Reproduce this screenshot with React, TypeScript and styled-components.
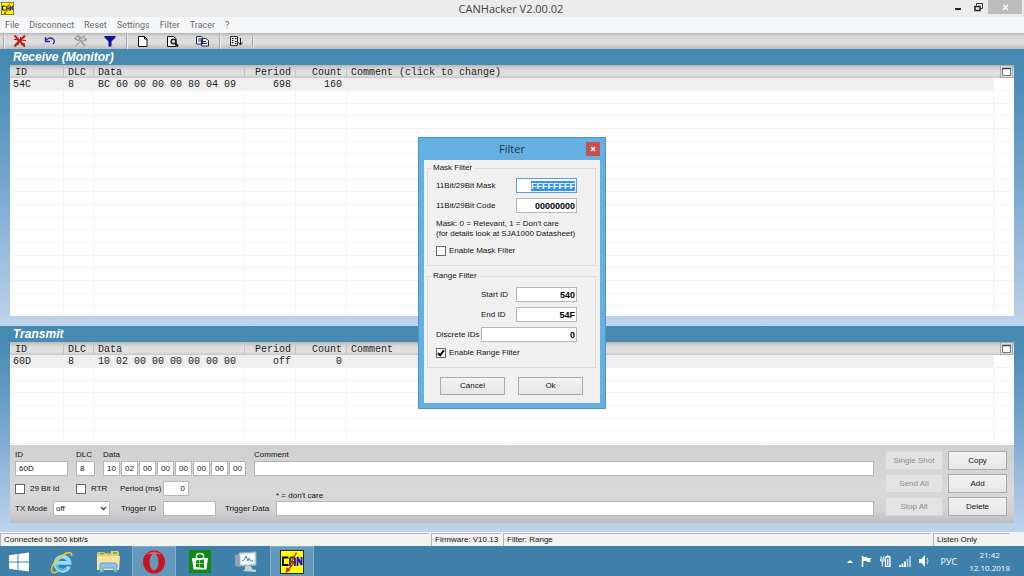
import React, { useEffect, useRef } from "react";
import styled, { createGlobalStyle, css } from "styled-components";

const UI = `"Liberation Sans", Arial, sans-serif`;
const SEGOE = `"Open Sans", "Noto Sans", sans-serif`;
const MONO = `"Liberation Mono", "DejaVu Sans Mono", monospace`;

const Global = createGlobalStyle`
  *, *::before, *::after { box-sizing: border-box; }
  body { margin: 0; background: #f0f0f0; }
  button, input, select { font: inherit; color: inherit; margin: 0; border-radius: 0; }
`;

const Page = styled.div`
  position: relative;
  display: flex;
  flex-direction: column;
  min-height: 100vh;
  font: 8px/12px ${UI};
  color: #111;
`;

/* window chrome */
const TitleBar = styled.header`
  display: grid;
  grid-template-columns: 1fr auto 1fr;
  height: 17px;
  padding-right: 2px;
  background: #ebebeb;
`;
const AppIcon = styled.div`
  padding: 2px 0 0 1px;
  svg { display: block; }
`;
const WindowTitle = styled.h1`
  margin: 0;
  font: 400 11px/17px ${SEGOE};
  color: #444;
`;
const WindowButtons = styled.div`
  display: flex;
  justify-content: flex-end;
`;
const WindowButton = styled.button<{ $close?: boolean }>`
  display: flex;
  align-items: center;
  justify-content: center;
  width: ${(p) => (p.$close ? 34 : 20)}px;
  height: 14px;
  padding: 0;
  border: 0;
  background: ${(p) => (p.$close ? "#bcbcbc" : "transparent")};
`;
const MenuBar = styled.nav`
  display: flex;
  gap: 10px;
  height: 16px;
  padding-left: 5px;
  background: #f5f6f7;
`;
const MenuItem = styled.button`
  padding: 0;
  border: 0;
  background: none;
  font: 9px/16px Roboto, ${SEGOE};
  color: #6b6b6b;
`;
const ToolBar = styled.div`
  display: flex;
  align-items: center;
  height: 16px;
  padding-left: 3px;
  background: linear-gradient(#b4b4b4, #d9d9d9 20%, #dfdfdf 60%, #bdbdbd);
`;
const ToolButton = styled.button`
  display: flex;
  align-items: center;
  justify-content: center;
  width: 30px;
  height: 16px;
  padding: 0;
  border: 0;
  background: none;
`;
const ToolGroup = styled.div`
  display: flex;
  padding: 0 1px;
  border-left: 1px solid #a2a2a2;
  box-shadow: inset 1px 0 #eee;
`;

/* message panels */
const Panel = styled.section<{ $grow?: boolean }>`
  display: flex;
  flex-direction: column;
  flex: ${(p) => (p.$grow ? "1 0 277px" : "0 0 206px")};
  padding: 0 10px ${(p) => (p.$grow ? 10 : 9)}px;
  background: linear-gradient(#4489b0, #4a8db6 12%, #7fabd2 55%, #bfd4ec);
`;
const PanelTitle = styled.h2`
  margin: 0;
  padding-left: 3px;
  font: italic 700 12px/17px "Liberation Sans", Arial, sans-serif;
  height: 16px;
  color: #fff;
`;
const Grid = styled.div`
  flex: 1 0 0;
  min-height: 102px;
  overflow: hidden;
  background: #fff;
`;
const Table = styled.table`
  width: 100%;
  border-collapse: separate;
  border-spacing: 0;
  table-layout: fixed;
  font: 10px/10px ${MONO};
  color: #222;
  th, td {
    height: 13px;
    padding: 2px 4px 0;
    text-align: left;
    font-weight: 400;
    white-space: pre;
  }
  th {
    border-right: 1px solid #c4c4c4;
    background: linear-gradient(#b9b9b9, #dcdcdc 35%, #e2e2e2 75%, #c6c6c6);
  }
  th:nth-child(n + 6) { border-right: 0; }
  th:first-child { padding-left: 5px; }
  td {
    border-right: 1px solid #f1f1f1;
    border-bottom: 1px solid #f1f1f1;
  }
  td:first-child { padding-left: 3px; }
  td:last-child { border-right: 0; }
  tbody tr:nth-child(3n) td { height: 12px; }
  th:nth-child(4), td:nth-child(4),
  th:nth-child(5), td:nth-child(5) { text-align: right; }
  th:last-child, td:last-child { padding: 0; }
`;
const Row = styled.tr<{ $active?: boolean }>`
  td:not(:last-child) { background: ${(p) => (p.$active ? "#efefef" : "#fff")}; }
`;
const Col = styled.col<{ $w?: number }>`
  width: ${(p) => (p.$w ? `${p.$w}px` : "auto")};
`;
const Maximize = styled.button`
  display: block;
  width: 13px;
  height: 13px;
  margin-left: 6px;
  padding: 0;
  border: 0;
  background: none;
  svg { display: block; }
`;

/* transmit editor */
const Editor = styled.form`
  display: flex;
  gap: 11px;
  height: 78px;
  padding: 3px 7px 5px 5px;
  background: linear-gradient(#d0d0d0, #d9d9d9 60%, #d2d2d2 85%, #bdbdbd);
`;
const EditorFields = styled.div`
  flex: 1;
  display: flex;
  flex-direction: column;
  gap: 5px;
  min-width: 0;
`;
const FieldRow = styled.div`
  display: flex;
  gap: 8px;
  line-height: 13px;
`;
const Field = styled.label<{ $w?: number }>`
  display: flex;
  flex-direction: column;
  ${(p) => (p.$w ? `width: ${p.$w}px;` : "flex: 1;")}
`;
const ByteField = styled.fieldset`
  display: grid;
  gap: 1px;
  grid-template-columns: repeat(8, 17px);
  margin: 0;
  padding: 0;
  border: 0;
  legend { padding: 0; line-height: 13px; }
`;
const TextBox = styled.input<{ $w?: number; $right?: boolean; $strong?: boolean; $focus?: boolean }>`
  width: ${(p) => (p.$w ? `${p.$w}px` : "100%")};
  min-width: 0;
  height: 15px;
  padding: 0 3px;
  border: 1px solid ${(p) => (p.$focus ? "#5a9be0" : "#b5b5b5")};
  background: #fff;
  outline: 0;
  line-height: 12px;
  text-align: ${(p) => (p.$right ? "right" : "left")};
  ${(p) => p.$strong && css`color: #000; padding: 0 1px; font-size: 9px; font-weight: 700;`}
  &::selection { background: #3393ee; color: #fff; }
`;
const OptionArea = styled.div`
  display: flex;
  gap: 9px;
`;
const OptionRows = styled.div`
  display: flex;
  flex-direction: column;
  gap: 5px;
  width: 201px;
`;
const OptionRow = styled.div`
  display: flex;
  align-items: center;
  height: 15px;
  white-space: nowrap;
`;
const OptionCell = styled.span<{ $w: number }>`
  width: ${(p) => p.$w}px;
`;
const Caption = styled.label<{ $w: number }>`
  width: ${(p) => p.$w}px;
`;
const CheckLabel = styled.label<{ $gap?: number }>`
  display: flex;
  align-items: center;
  gap: ${(p) => p.$gap ?? 3}px;
`;
const CheckBox = styled.input.attrs({ type: "checkbox" })`
  appearance: none;
  display: grid;
  place-items: center;
  width: 10px;
  height: 10px;
  border: 1px solid #666;
  background: #fff;
  &:checked::after {
    content: "";
    width: 4px;
    height: 7px;
    margin-bottom: 2px;
    border: solid #000;
    border-width: 0 2px 2px 0;
    transform: rotate(40deg);
  }
`;
const SelectWrap = styled.span`
  display: grid;
  align-items: center;
  width: 57px;
  margin-right: 11px;
  select, svg { grid-area: 1 / 1; }
  svg { justify-self: end; margin-right: 3px; pointer-events: none; }
`;
const Select = styled.select`
  appearance: none;
  width: 100%;
  height: 15px;
  padding: 0 2px;
  border: 1px solid #b5b5b5;
  background: #fff;
  line-height: 12px;
`;
const TriggerData = styled.div`
  flex: 1;
  display: grid;
  grid-template-columns: 51px 1fr;
  align-content: end;
  align-items: center;
`;
const Note = styled.span`
  grid-column: 2;
  line-height: 10px;
`;
const Actions = styled.div`
  display: grid;
  grid-template-columns: 58px 59px;
  grid-auto-rows: 19px;
  gap: 4px 5px;
  padding-top: 3px;
`;
const PushButton = styled.button`
  padding: 0;
  border: 1px solid #a9a9a9;
  background: linear-gradient(#f2f2f2, #e6e6e6);
  color: #111;
  line-height: 12px;
  &:disabled {
    border-color: #d6d6d6;
    background: #e3e3e3;
    color: #8c8c8c;
  }
`;

/* status bar */
const StatusBar = styled.footer`
  display: grid;
  grid-template-columns: 429px 70px 1fr 76px;
  gap: 2px;
  height: 14px;
  padding: 1px 15px 0 0;
  background: #f1f1f1;
`;
const StatusCell = styled.span`
  padding-left: 3px;
  border-top: 1px solid #b4b4b4;
  border-left: 1px solid #b4b4b4;
  line-height: 12px;
  white-space: nowrap;
`;

/* taskbar */
const TaskBar = styled.nav`
  display: flex;
  justify-content: space-between;
  height: 30px;
  padding-right: 14px;
  background: #3e80a9;
  color: #fff;
`;
const Tasks = styled.div`
  display: flex;
  gap: 2px;
`;
const TaskButton = styled.button<{ $start?: boolean; $open?: boolean }>`
  display: flex;
  align-items: center;
  justify-content: center;
  width: ${(p) => (p.$start ? 38 : 44)}px;
  padding: 0;
  border: 1px solid ${(p) => (p.$open ? "#87b0cb" : "transparent")};
  border-bottom: 0;
  background: ${(p) => (p.$open ? "#6299bc" : "transparent")};
`;
const Tray = styled.div`
  display: flex;
  align-items: center;
  font: 8px/13px ${SEGOE};
`;
const TrayIcons = styled.div`
  display: flex;
  align-items: center;
  gap: 8px;
  margin-right: 12px;
`;
const Language = styled.span`
  font-size: 9px;
`;
const Clock = styled.time`
  margin-left: 12px;
  text-align: center;
`;

/* filter dialog */
const Dialog = styled.div`
  position: absolute;
  top: 137px;
  left: 50%;
  width: 188px;
  transform: translateX(-50%);
  padding: 0 5px 5px;
  border: 1px solid #4a94c8;
  background: #65b0e2;
`;
const DialogTitle = styled.div`
  display: grid;
  grid-template-columns: 1fr auto 1fr;
  align-items: center;
  height: 22px;
  h2 { grid-column: 2; margin: 0; font: 400 11px/20px ${SEGOE}; color: #234; }
`;
const DialogClose = styled.button`
  justify-self: end;
  width: 14px;
  height: 14px;
  padding: 0;
  border: 0;
  background: #c75050;
  svg { display: block; margin: auto; }
`;
const DialogBody = styled.form`
  display: flex;
  flex-direction: column;
  padding: 2px 4px 8px 3px;
  background: #f0f0f0;
`;
const Group = styled.fieldset<{ $top?: number }>`
  min-width: 0;
  margin: 0 0 4px;
  padding: ${(p) => p.$top ?? 4}px 18px 8px 8px;
  border: 1px solid #dcdcdc;
  legend { margin-left: -5px; padding: 0 2px; line-height: 12px; }
  p { margin: 6px 0; line-height: 10px; white-space: nowrap; }
`;
const DialogRow = styled.div<{ $indent?: number; $wide?: boolean }>`
  display: grid;
  grid-template-columns: 1fr ${(p) => (p.$wide ? 96 : 61)}px;
  align-items: center;
  margin-bottom: 5px;
  padding-left: ${(p) => p.$indent ?? 0}px;
  white-space: nowrap;
`;
const DialogActions = styled.div`
  display: flex;
  justify-content: center;
  gap: 13px;
  padding-top: 5px;
  ${PushButton} { width: 65px; height: 18px; }
`;

const CanLogo = ({ size }: { size: number }) => (
  <svg width={size} height={size} viewBox="0 0 24 24">
    <rect x="0.5" y="0.5" width="23" height="23" fill="#ffff00" stroke="#222" />
    <g fill="none" strokeWidth="1.800">
      <path d="M8.500 7.500H3v7.500h5.500" stroke="#000" />
      <path d="M10 16V8.500l1-1h3l1 1V16M10 12h5" stroke="#23236a" />
      <path d="M17.500 16V7l4 8V7" stroke="#1a1acc" />
    </g>
    <path d="M16.500 2.500 11 12.500h3L8 20" fill="none" stroke="#d42a10" strokeWidth="1.500" />
    <path d="M5.500 23l1-6 4 3.500z" fill="#d42a10" />
  </svg>
);

const Icon = ({ children, w = 14, h = 14 }: { children: React.ReactNode; w?: number; h?: number }) => (
  <svg width={w} height={h} viewBox={`0 0 ${w} ${h}`} fill="none" stroke="#111">
    {children}
  </svg>
);

const toolGroups: { name: string; icon: React.ReactNode }[][] = [
  [
    {
      name: "Disconnect",
      icon: (
        <Icon>
          <path d="M1.500 1.500 12 12.500M12 1.500 1.500 12.500" stroke="#e0170b" strokeWidth="2.200" />
          <path d="M1 5.500h3L6 8M8 6l5 .5M2 10h4M7.500 3v3M8 11l4-1.500" stroke="#8b1a10" />
        </Icon>
      ),
    },
    {
      name: "Reset",
      icon: (
        <Icon>
          <path d="M2.500 6.500C5 4 8 3.500 10 5s1.500 3.500 0 5" stroke="#23239a" strokeWidth="1.300" />
          <path d="M2.500 3v4.500H7" stroke="#23239a" strokeWidth="1.300" />
        </Icon>
      ),
    },
    {
      name: "Settings",
      icon: (
        <Icon>
          <path d="M2 4.500 5 2l2.500 1.500L5 6.500zM6 5l6 7" stroke="#999" strokeWidth="1.500" />
          <path d="M2 12.500 9 6M9 6c-1-2 .5-4 2.500-4L10.500 4 12 5.500 13.500 4.500C13.500 7 11 8 9 6" stroke="#a5a5a5" strokeWidth="1.200" />
        </Icon>
      ),
    },
    {
      name: "Filter",
      icon: (
        <Icon>
          <path d="M1.500 2h11v1.500L8.500 7.500V12.500h-3V7.500L1.500 3.500z" fill="#10109a" stroke="none" />
        </Icon>
      ),
    },
  ],
  [
    {
      name: "New",
      icon: (
        <Icon>
          <path d="M2.500 2.500h6l2.500 2.500v7.500H2.500z" fill="#fff" />
          <path d="M8.500 2.500V5H11" />
        </Icon>
      ),
    },
    {
      name: "Find",
      icon: (
        <Icon>
          <path d="M1.500 2.500h6l2.500 2v8h-8.500z" fill="#fff" />
          <circle cx="7.500" cy="7.500" r="2.400" fill="#b9dada" strokeWidth="1.300" />
          <path d="M9 9l3 3.500" strokeWidth="2" />
        </Icon>
      ),
    },
    {
      name: "Copy",
      icon: (
        <Icon>
          <path d="M0.500 2.500h5l1 1v6.500h-6zM5.500 4.500h4.500l2.500 2v5.500h-7z" fill="#fff" stroke="#22225c" />
          <path d="M2 5h3M2 7h3M7 7.500h3M7 9.500h4" stroke="#22225c" />
        </Icon>
      ),
    },
  ],
  [
    {
      name: "Sort",
      icon: (
        <Icon>
          <path d="M1.500 2.500h7v9h-7z" fill="#e4e4e4" stroke="#333" />
          <path d="M3 4.500h1.500M3 6.500h1.500M3 8.500h1.500M6 4.500h1.500M6 7.500h1.500M6 9.500h1.500M11.500 4v7M9.500 8.500l2 2.500 2-2.500" />
        </Icon>
      ),
    },
  ],
];

type Message = { id: string; dlc: string; data: string; period: string; count: string };

const MessageTable = ({ comment, message, blanks }: { comment: string; message: Message; blanks: number }) => (
  <Grid>
    <Table>
      <colgroup>
        <Col $w={54} /><Col $w={30} /><Col $w={151} /><Col $w={51} /><Col $w={51} /><Col /><Col $w={20} />
      </colgroup>
      <thead>
        <tr>
          <th>ID</th><th>DLC</th><th>Data</th><th>Period</th><th>Count</th><th>{comment}</th>
          <th>
            <Maximize type="button" aria-label="Maximize panel">
              <Icon w={13} h={13}>
                <rect x="0.500" y="0.500" width="12" height="12" fill="#ddd" stroke="#aaa" />
                <path d="M2.500 3.500h8v7h-8z" fill="#fff" stroke="#777" />
                <path d="M2 3.500h9" stroke="#444" strokeWidth="1.500" />
              </Icon>
            </Maximize>
          </th>
        </tr>
      </thead>
      <tbody>
        <Row $active>
          <td>{message.id}</td><td>{message.dlc}</td><td>{message.data}</td>
          <td>{message.period}</td><td>{message.count}</td><td /><td />
        </Row>
        {Array.from({ length: blanks }, (_, i) => (
          <Row key={i}><td /><td /><td /><td /><td /><td /><td /></Row>
        ))}
      </tbody>
    </Table>
  </Grid>
);

const FilterDialog = () => {
  const mask = useRef<HTMLInputElement>(null);
  useEffect(() => {
    mask.current?.focus({ preventScroll: true });
    mask.current?.select();
  }, []);
  return (
    <Dialog role="dialog" aria-labelledby="filter-title">
      <DialogTitle>
        <h2 id="filter-title">Filter</h2>
        <DialogClose aria-label="Close">
          <Icon w={6} h={6}><path d="M1 1l4 4M5 1 1 5" stroke="#fff" strokeWidth="1.300" /></Icon>
        </DialogClose>
      </DialogTitle>
      <DialogBody>
        <Group>
          <legend>Mask Filter</legend>
          <DialogRow>
            <label htmlFor="mask">11Bit/29Bit Mask</label>
            <TextBox id="mask" ref={mask} $right $strong $focus defaultValue="FFFFFFFF" />
          </DialogRow>
          <DialogRow>
            <label htmlFor="code">11Bit/29Bit Code</label>
            <TextBox id="code" $right $strong defaultValue="00000000" />
          </DialogRow>
          <p>Mask: 0 = Relevant, 1 = Don't care<br />(for details look at SJA1000 Datasheet)</p>
          <CheckLabel><CheckBox />Enable Mask Filter</CheckLabel>
        </Group>
        <Group $top={5}>
          <legend>Range Filter</legend>
          <DialogRow $indent={45}>
            <label htmlFor="start">Start ID</label>
            <TextBox id="start" $right $strong defaultValue="540" />
          </DialogRow>
          <DialogRow $indent={45}>
            <label htmlFor="end">End ID</label>
            <TextBox id="end" $right $strong defaultValue="54F" />
          </DialogRow>
          <DialogRow $wide>
            <label htmlFor="discrete">Discrete IDs</label>
            <TextBox id="discrete" $right $strong defaultValue="0" />
          </DialogRow>
          <CheckLabel><CheckBox defaultChecked />Enable Range Filter</CheckLabel>
        </Group>
        <DialogActions>
          <PushButton type="button">Cancel</PushButton>
          <PushButton type="button">Ok</PushButton>
        </DialogActions>
      </DialogBody>
    </Dialog>
  );
};

export default function App() {
  return (
    <Page>
      <Global />
      <TitleBar>
        <AppIcon><CanLogo size={13} /></AppIcon>
        <WindowTitle>CANHacker V2.00.02</WindowTitle>
        <WindowButtons>
          <WindowButton aria-label="Minimize">
            <Icon w={8} h={8}><path d="M1 6h6" strokeWidth="2" stroke="#222" /></Icon>
          </WindowButton>
          <WindowButton aria-label="Restore">
            <Icon w={9} h={9}>
              <path d="M2.500 2.500v-2h6v5h-2" stroke="#333" />
              <path d="M1 3.500h5v4H1z" stroke="#222" strokeWidth="1.500" />
            </Icon>
          </WindowButton>
          <WindowButton $close aria-label="Close">
            <Icon w={7} h={7}><path d="M1 1l5 5M6 1 1 6" stroke="#fff" strokeWidth="1.500" /></Icon>
          </WindowButton>
        </WindowButtons>
      </TitleBar>
      <MenuBar>
        {["File", "Disconnect", "Reset", "Settings", "Filter", "Tracer", "?"].map((m) => (
          <MenuItem key={m}>{m}</MenuItem>
        ))}
      </MenuBar>
      <ToolBar>
        {toolGroups.map((group, i) => (
          <ToolGroup key={i}>
            {group.map((t) => (
              <ToolButton key={t.name} aria-label={t.name}>{t.icon}</ToolButton>
            ))}
          </ToolGroup>
        ))}
        <ToolGroup><Icon w={1} h={12}>{null}</Icon></ToolGroup>
      </ToolBar>

      <Panel $grow>
        <PanelTitle>Receive (Monitor)</PanelTitle>
        <MessageTable
          comment="Comment (click to change)"
          message={{ id: "54C", dlc: "8", data: "BC 60 00 00 00 80 04 09", period: "698", count: "160" }}
          blanks={18}
        />
      </Panel>

      <Panel>
        <PanelTitle>Transmit</PanelTitle>
        <MessageTable
          comment="Comment"
          message={{ id: "60D", dlc: "8", data: "10 02 00 00 00 00 00 00", period: "off", count: "0" }}
          blanks={6}
        />
        <Editor>
          <EditorFields>
            <FieldRow>
              <Field $w={53}>ID<TextBox defaultValue="60D" /></Field>
              <Field $w={19}>DLC<TextBox defaultValue="8" /></Field>
              <ByteField>
                <legend>Data</legend>
                {["10", "02", "00", "00", "00", "00", "00", "00"].map((b, i) => (
                  <TextBox key={i} aria-label={`Byte ${i}`} defaultValue={b} />
                ))}
              </ByteField>
              <Field>Comment<TextBox /></Field>
            </FieldRow>
            <OptionArea>
              <OptionRows>
                <OptionRow>
                  <OptionCell $w={61}><CheckLabel $gap={5}><CheckBox />29 Bit Id</CheckLabel></OptionCell>
                  <OptionCell $w={44}><CheckLabel $gap={5}><CheckBox />RTR</CheckLabel></OptionCell>
                  <Caption $w={43} htmlFor="period">Period (ms)</Caption>
                  <TextBox id="period" $w={26} $right defaultValue="0" />
                </OptionRow>
                <OptionRow>
                  <Caption $w={38} htmlFor="tx">TX Mode</Caption>
                  <SelectWrap>
                    <Select id="tx" defaultValue="off"><option>off</option></Select>
                    <Icon w={7} h={5}><path d="M1 1l2.500 2.500L6 1" stroke="#444" strokeWidth="1.300" /></Icon>
                  </SelectWrap>
                  <Caption $w={42} htmlFor="trigger">Trigger ID</Caption>
                  <TextBox id="trigger" $w={53} />
                </OptionRow>
              </OptionRows>
              <TriggerData>
                <Note>* = don't care</Note>
                <label htmlFor="trigger-data">Trigger Data</label>
                <TextBox id="trigger-data" />
              </TriggerData>
            </OptionArea>
          </EditorFields>
          <Actions>
            <PushButton type="button" disabled>Single Shot</PushButton>
            <PushButton type="button">Copy</PushButton>
            <PushButton type="button" disabled>Send All</PushButton>
            <PushButton type="button">Add</PushButton>
            <PushButton type="button" disabled>Stop All</PushButton>
            <PushButton type="button">Delete</PushButton>
          </Actions>
        </Editor>
      </Panel>

      <StatusBar>
        <StatusCell>Connected to 500 kbit/s</StatusCell>
        <StatusCell>Firmware: V10.13</StatusCell>
        <StatusCell>Filter: Range</StatusCell>
        <StatusCell>Listen Only</StatusCell>
      </StatusBar>

      <TaskBar>
        <Tasks>
          <TaskButton $start aria-label="Start">
            <svg width="20" height="20" viewBox="0 0 20 20" fill="#fff">
              <path d="M0 3.200 8.500 2v7.500H0zM9.500 1.900 20 .5v9H9.500zM0 10.500h8.500V18L0 16.800zM9.500 10.500H20v9l-10.500-1.400z" />
            </svg>
          </TaskButton>
          <TaskButton aria-label="Internet Explorer">
            <svg width="24" height="24" viewBox="0 0 24 24" fill="none">
              <path d="M19 16.500A7 7 0 1 1 19.500 12.800H7" stroke="#8fdcfb" strokeWidth="3.800" />
              <path d="M17 18.500A7 7 0 0 1 6 14.500" stroke="#4bbdf2" strokeWidth="1.500" />
              <path d="M21.500 6c1-4-3-4.500-8.500-1C6 9 0 17 2 21.500c1 2 4 1 6.500-.5" stroke="#f2c230" strokeWidth="1.600" />
            </svg>
          </TaskButton>
          <TaskButton aria-label="File Explorer">
            <svg width="25" height="23" viewBox="0 0 25 23">
              <path d="M1 3.500 2 2h6l1 1h6V1h7l1 2v17H1z" fill="#e9c96a" />
              <path d="M4 3.500h4M11 3h3M17 3h4" stroke="#4fb04f" strokeWidth="1.500" />
              <path d="M1 6h23l-1 14H1z" fill="#f7e3a1" />
              <path d="M4 22v-7q0-2 2-2h13q2 0 2 2v7h-3v-4H7v4z" fill="#8ac4ea" stroke="#5ba1d2" />
            </svg>
          </TaskButton>
          <TaskButton $open aria-label="Opera">
            <svg width="24" height="24" viewBox="0 0 24 24">
              <ellipse cx="12" cy="12" rx="11" ry="11.500" fill="#c9141e" />
              <path d="M4 5Q12-2 20 5l-4-1H8z" fill="#ee5a55" />
              <ellipse cx="12" cy="12" rx="4.500" ry="8.500" fill="#6299bc" />
            </svg>
          </TaskButton>
          <TaskButton aria-label="Store">
            <svg width="22" height="23" viewBox="0 0 22 23">
              <rect width="22" height="23" fill="#0f8a0f" />
              <path d="M3 8h16l-1.500 11.500h-13z" fill="#fff" />
              <path d="M7.500 8V5.500q0-2 3.500-2t3.500 2V8" fill="none" stroke="#fff" strokeWidth="1.300" />
              <path d="M7 10.500l3.500-.5v3.500H7zM11 10l4-.5v4h-4zM7 14h3.500v3.500L7 17zM11 14h4v4l-4-.5z" fill="#0f8a0f" />
            </svg>
          </TaskButton>
          <TaskButton aria-label="Task Manager">
            <svg width="24" height="22" viewBox="0 0 24 22">
              <path d="M1 4l5-1v13l-5-1z" fill="#8da5b5" />
              <path d="M5 2l17-1v13L6 15z" fill="#dfe9ef" stroke="#93a8b5" />
              <path d="M7 4l13-1v9L7.500 13z" fill="#fbfdff" />
              <path d="M8 10l2-1 2-4 2 5 1-3 2 3h2" fill="none" stroke="#3a7fbd" />
              <path d="M11 15h6l1 3 4 1v2l-13-1 2-2z" fill="#c5d2da" />
            </svg>
          </TaskButton>
          <TaskButton $open aria-label="CANHacker"><CanLogo size={24} /></TaskButton>
        </Tasks>
        <Tray>
          <TrayIcons>
            <Icon w={6} h={4}><path d="M0 4l3-3 3 3z" fill="#fff" stroke="none" /></Icon>
            <Icon w={11} h={11}>
              <path d="M1.500 0v11" stroke="#fff" strokeWidth="1.500" />
              <path d="M2 1h4v1h4.500L9 4l1 2H6V5H2z" fill="#fff" stroke="none" />
            </Icon>
            <Icon w={11} h={12}>
              <path d="M5.500 2h4.500v9.500H5.500zM7 .8h1.500" stroke="#fff" strokeWidth="1.300" />
              <path d="M1 1.500v2M3.500 1.500v2M0.500 4h3.500v2H.5zM2.300 6v5.500" stroke="#fff" />
              <path d="M7.200 4h1.200v6H7.200z" fill="#fff" stroke="none" />
            </Icon>
            <Icon w={12} h={11}>
              <path d="M1 11V9M3.500 11V7.500M6 11V5.500" stroke="#fff" strokeWidth="1.800" />
              <path d="M8.500 11V3M11 11V0" stroke="#a9c6d8" strokeWidth="1.800" />
            </Icon>
            <Icon w={10} h={12}>
              <path d="M0 4h2.500L6 0v12L2.500 8H0z" fill="#fff" stroke="none" />
              <path d="M8 3q2 3 0 6" stroke="#cfe0ea" />
            </Icon>
          </TrayIcons>
          <Language>РУС</Language>
          <Clock>21:42<br />12.10.2018</Clock>
        </Tray>
      </TaskBar>

      <FilterDialog />
    </Page>
  );
}
